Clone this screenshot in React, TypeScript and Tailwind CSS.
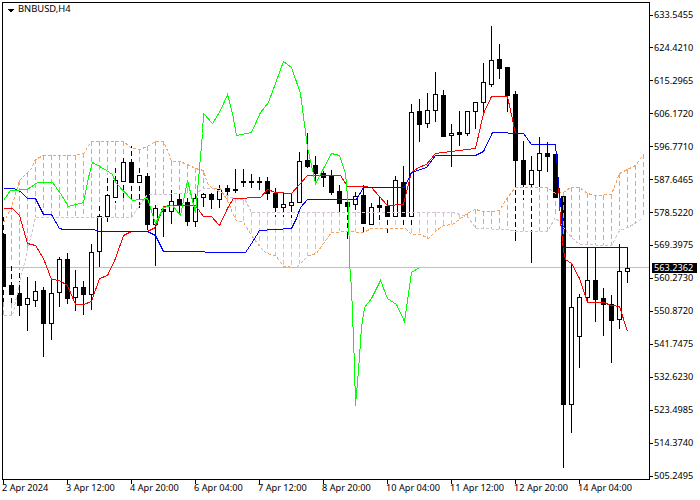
type Pt = [number, number];

// x, wick top, wick bottom, body top, body bottom, 1 = black candle
const candles: number[][] = [
  [3, 217, 302, 234, 286, 1], [11, 263, 303, 285, 294, 1], [19, 270, 316, 293, 305, 1], [27, 277, 331, 298, 304, 0],
  [35, 281, 307, 291, 300, 0], [43, 287, 357, 290, 323, 1], [51, 280, 340, 293, 323, 0], [59, 257, 307, 259, 292, 0],
  [67, 253, 304, 259, 298, 1], [75, 270, 311, 287, 297, 0], [83, 281, 315, 287, 294, 1], [91, 244, 310, 252, 294, 0],
  [99, 203, 267, 216, 251, 0], [107, 175, 222, 195, 216, 0], [115, 165, 203, 180, 197, 0], [123, 155, 198, 162, 181, 0],
  [131, 146, 202, 162, 182, 1], [139, 165, 208, 175, 182, 0], [147, 170, 230, 176, 224, 1], [155, 205, 266, 208, 224, 0],
  [163, 207, 237, 209, 211, 1], [171, 187, 224, 201, 211, 0], [179, 193, 215, 199, 204, 1], [187, 198, 226, 202, 221, 1],
  [195, 190, 227, 198, 221, 0], [203, 193, 207, 194, 197, 0], [211, 193, 209, 194, 199, 1], [219, 185, 208, 189, 199, 0],
  [227, 185, 195, 188, 191, 1], [235, 169, 193, 189, 190, 1], [243, 169, 187, 181, 182, 1], [251, 174, 188, 181, 182, 1],
  [259, 177, 190, 181, 182, 1], [267, 177, 200, 181, 193, 1], [275, 188, 217, 193, 207, 1], [283, 192, 217, 204, 207, 0],
  [291, 193, 218, 202, 205, 0], [299, 152, 200, 161, 202, 0], [307, 133, 168, 160, 166, 1], [315, 156, 183, 165, 173, 1],
  [323, 171, 187, 173, 177, 1], [331, 170, 195, 176, 192, 1], [339, 185, 212, 191, 203, 1], [347, 195, 239, 202, 206, 1],
  [355, 192, 210, 196, 204, 0], [363, 185, 232, 195, 223, 1], [371, 203, 228, 207, 224, 0], [379, 197, 222, 205, 207, 1],
  [387, 200, 233, 206, 216, 1], [395, 176, 218, 180, 216, 0], [403, 166, 228, 182, 216, 1], [411, 104, 225, 112, 216, 0],
  [419, 99, 142, 111, 124, 1], [427, 93, 128, 110, 123, 0], [435, 72, 122, 94, 110, 0], [443, 90, 137, 95, 136, 1],
  [451, 124, 167, 133, 135, 0], [459, 111, 146, 132, 134, 1], [467, 111, 136, 111, 133, 0], [475, 102, 129, 102, 111, 0],
  [483, 63, 112, 82, 102, 0], [491, 26, 87, 60, 84, 0], [499, 44, 79, 59, 68, 1], [507, 67, 112, 67, 95, 1],
  [515, 91, 241, 94, 160, 1], [523, 141, 200, 160, 184, 1], [531, 156, 263, 170, 184, 0], [539, 137, 188, 153, 170, 0],
  [547, 142, 172, 153, 156, 1], [555, 154, 198, 154, 197, 1], [563, 196, 468, 196, 404, 1], [571, 263, 433, 307, 404, 0],
  [579, 294, 368, 297, 336, 0], [587, 247, 302, 280, 297, 0], [595, 247, 322, 280, 299, 1], [603, 288, 336, 298, 304, 1],
  [611, 295, 363, 304, 320, 1], [619, 244, 329, 271, 319, 0], [627, 247, 283, 268, 271, 0],
];

const spanA: Pt[] = [
  [3, 222], [11, 207], [19, 180], [27, 172], [31, 168], [35, 159], [43, 155], [75, 155], [83, 153], [91, 141], [123, 141],
  [131, 148], [139, 149], [147, 146], [155, 141], [163, 141], [170, 157], [171, 161], [179, 161], [187, 164], [195, 168],
  [203, 170], [207, 183], [212, 188], [220, 188], [228, 202], [233, 215], [236, 220], [243, 222], [251, 235], [260, 247],
  [266, 253], [275, 255], [283, 266], [296, 267], [308, 255], [316, 253], [323, 243], [331, 232], [346, 231], [363, 232],
  [371, 228], [405, 228], [411, 234], [420, 234], [428, 238], [436, 230], [443, 225], [452, 224], [468, 212], [475, 209],
  [483, 211], [492, 211], [499, 210], [507, 197], [515, 187], [547, 187], [555, 193], [563, 192], [570, 187], [579, 187],
  [587, 193], [595, 195], [611, 194], [619, 173], [627, 169], [635, 165], [643, 154],
];

const spanB: Pt[] = [
  [3, 315], [12, 315], [19, 283], [27, 250], [35, 217], [131, 217], [139, 205], [147, 194], [195, 193], [203, 188], [213, 188],
  [233, 198], [245, 200], [251, 212], [452, 212], [460, 214], [468, 217], [475, 228], [507, 229], [515, 231], [547, 231],
  [555, 217], [563, 227], [571, 237], [579, 244], [611, 245], [619, 230], [627, 227], [635, 223], [643, 217],
];

const red: Pt[] = [
  [3, 208], [12, 208], [19, 215], [27, 243], [35, 245], [43, 258], [51, 279], [59, 280], [67, 285], [75, 304], [83, 304],
  [91, 301], [99, 278], [107, 275], [115, 258], [123, 235], [131, 231], [147, 231], [155, 227], [163, 206], [171, 205],
  [195, 205], [203, 216], [211, 216], [219, 225], [227, 208], [233, 198], [260, 197], [267, 189], [275, 192], [291, 193],
  [307, 175], [340, 175], [347, 186], [363, 186], [371, 187], [387, 205], [403, 204], [411, 172], [418, 167], [426, 164],
  [435, 153], [459, 150], [475, 148], [483, 113], [491, 96], [507, 96], [515, 133], [523, 133], [531, 144], [555, 144],
  [558, 183], [560, 220], [563, 250], [565, 259], [571, 263], [579, 278], [587, 302], [603, 302], [611, 305], [619, 306],
  [627, 331],
];

const blue: Pt[] = [
  [3, 188], [13, 188], [20, 191], [27, 198], [35, 198], [43, 214], [51, 214], [59, 228], [63, 229], [93, 229], [99, 231],
  [147, 231], [155, 235], [163, 251], [245, 252], [253, 240], [259, 230], [291, 228], [296, 218], [300, 207], [307, 199],
  [356, 199], [363, 187], [404, 187], [411, 172], [426, 167], [435, 155], [475, 155], [483, 151], [492, 132], [523, 133],
  [531, 144], [555, 144], [558, 183], [562, 220], [563, 247], [627, 247],
];

const green: Pt[] = [
  [3, 200], [10, 190], [27, 189], [37, 182], [52, 182], [60, 193], [68, 206], [83, 202], [88, 177], [92, 162], [106, 170],
  [112, 174], [115, 182], [132, 200], [147, 198], [155, 223], [163, 207], [172, 205], [180, 215], [187, 180], [195, 212], [199, 168],
  [202, 133], [203, 113], [212, 123], [220, 110], [227, 94], [232, 113], [236, 135], [251, 132], [260, 112], [268, 102],
  [283, 61], [291, 67], [300, 93], [307, 147], [315, 183], [331, 153], [339, 155], [345, 173], [348, 207], [349, 262],
  [351, 288], [352, 313], [354, 365], [355, 405], [358, 370], [361, 327], [364, 307], [371, 298], [380, 280], [387, 298],
  [396, 304], [404, 321], [411, 272], [419, 267],
];

const prices = [
  "633.5455", "624.4210", "615.2965", "606.1720", "596.7710", "587.6465", "578.5220", "569.3975",
  "560.2730", "550.8720", "541.7475", "532.6230", "523.4985", "514.3740", "505.2495",
];
const times = [
  "2 Apr 2024", "3 Apr 12:00", "4 Apr 20:00", "6 Apr 04:00", "7 Apr 12:00",
  "8 Apr 20:00", "10 Apr 04:00", "11 Apr 12:00", "12 Apr 20:00", "14 Apr 04:00",
];

const pts = (line: Pt[]) => line.map(([x, y]) => `${x + 0.5},${y + 0.5}`).join(" ");

const at = (line: Pt[], x: number) => {
  for (let i = 1; i < line.length; i++) {
    const [x0, y0] = line[i - 1];
    const [x1, y1] = line[i];
    if (x <= x1) return Math.round(y0 + ((y1 - y0) * (x - x0)) / (x1 - x0));
  }
  return line[line.length - 1][1];
};

const hatchXs = Array.from({ length: 81 }, (_, i) => 3 + i * 8);

const Chart = () => (
  <svg width="653" height="484" className="block shrink-0" shapeRendering="crispEdges" fill="none">
    <defs>
      <clipPath id="plot">
        <rect x="3" y="3" width="646" height="476" />
      </clipPath>
    </defs>
    <g clipPath="url(#plot)">
      <line x1="3" y1="267.5" x2="649" y2="267.5" stroke="#c0c0c0" />
      {hatchXs.map((x) => {
        const a = at(spanA, x);
        const b = at(spanB, x);
        return (
          <line
            key={x}
            x1={x + 0.5}
            y1={Math.min(a, b)}
            x2={x + 0.5}
            y2={Math.max(a, b)}
            stroke={a < b ? "#f4a460" : "#d8bfd8"}
            strokeDasharray="5 3"
          />
        );
      })}
      {candles.map(([x, wt, wb, bt, bb, black]) => (
        <g key={x}>
          <line x1={x + 0.5} y1={wt} x2={x + 0.5} y2={wb} stroke="#000" />
          <rect x={x - 1.5} y={bt + 0.5} width="4" height={bb - bt} fill={black ? "#000" : "#fff"} stroke="#000" />
        </g>
      ))}
      {candles.map(([x, wt, wb, bt, bb]) => {
        const a = at(spanA, x);
        const b = at(spanB, x);
        const top = Math.min(a, b);
        const bottom = Math.max(a, b);
        const parts = [
          [Math.max(wt, top), Math.min(bt, bottom)],
          [Math.max(bb + 1, top), Math.min(wb, bottom)],
        ];
        return parts.map(([y1, y2], i) =>
          y2 > y1 ? (
            <line key={`${x}-${i}`} x1={x + 0.5} y1={y1} x2={x + 0.5} y2={y2} stroke="#fff" strokeDasharray="3 5" />
          ) : null,
        );
      })}
      <line x1="563.5" y1="197" x2="563.5" y2="244" stroke="#f4a460" strokeDasharray="5 3" />
      <polyline points={pts(spanB)} stroke="#d8bfd8" strokeDasharray="3 2" />
      <polyline points={pts(spanA)} stroke="#f4a460" strokeDasharray="3 2" />
      <polyline points={pts(red)} stroke="#ff0000" />
      <polyline points={pts(blue)} stroke="#0000ff" />
      <polyline points={pts(green)} stroke="#00ff00" />
    </g>
    <rect x="2.5" y="2.5" width="647" height="477" stroke="#000" />
    {prices.map((p, i) => {
      const y = Math.round(14.5 + i * 32.93) + 0.5;
      return <line key={p} x1="650" y1={y} x2="653" y2={y} stroke="#000" />;
    })}
    {times.map((t, i) => (
      <line key={t} x1={3.5 + i * 64} y1="480" x2={3.5 + i * 64} y2="484" stroke="#000" />
    ))}
    <path d="M7 9h7l-3.5 3.5z" fill="#000" />
  </svg>
);

export default function App() {
  return (
    <div className="relative flex h-[500px] w-[700px] flex-col overflow-hidden bg-white font-['Noto_Sans',sans-serif] text-[9.2px] leading-[10px] text-black">
      <div className="flex">
        <Chart />
        <div className="flex flex-col gap-[22.93px] pl-[1px] pt-[10px]">
          {prices.map((p) => (
            <span key={p} className="h-[10px]">
              {p}
            </span>
          ))}
        </div>
      </div>
      <div className="-mt-px flex pl-[2px]">
        {times.map((t) => (
          <span key={t} className="w-[64px] shrink-0 whitespace-nowrap">
            {t}
          </span>
        ))}
      </div>
      <span className="absolute left-[18px] top-[4px] text-[9.4px]">BNBUSD,H4</span>
      <span className="absolute left-[652px] top-[263px] h-[10px] w-[45px] bg-black pl-[2px] leading-[10px] text-white">
        563.2362
      </span>
    </div>
  );
}
